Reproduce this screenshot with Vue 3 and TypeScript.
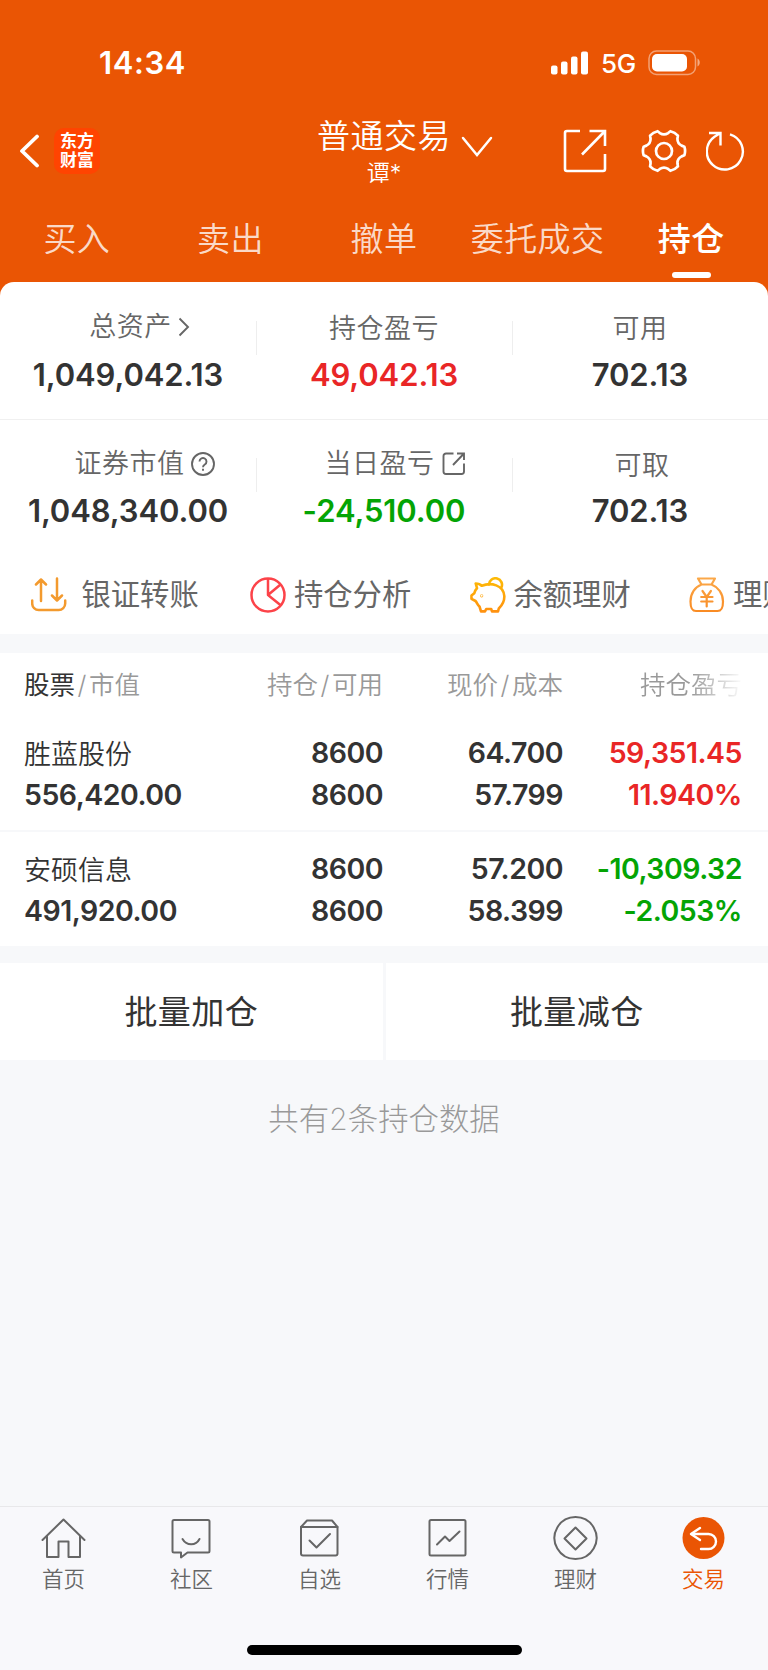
<script setup lang="ts">
interface Metric {
  label: string
  value: string
  tone?: 'up' | 'down'
  icon?: 'chevron' | 'help' | 'share'
  nudge?: boolean
}

interface Holding {
  name: string
  marketValue: string
  shares: string
  available: string
  price: string
  cost: string
  profit: string
  ratio: string
  tone: 'up' | 'down'
}

interface NavItem {
  label: string
  paths: string[]
  active?: boolean
}

const tabs: string[] = ['买入', '卖出', '撤单', '委托成交', '持仓']
const activeTab = '持仓'

const metricRows: Metric[][] = [
  [
    { label: '总资产', value: '1,049,042.13', icon: 'chevron' },
    { label: '持仓盈亏', value: '49,042.13', tone: 'up' },
    { label: '可用', value: '702.13' },
  ],
  [
    { label: '证券市值', value: '1,048,340.00', icon: 'help' },
    { label: '当日盈亏', value: '-24,510.00', tone: 'down', icon: 'share' },
    { label: '可取', value: '702.13', nudge: true },
  ],
]

const holdings: Holding[] = [
  {
    name: '胜蓝股份', marketValue: '556,420.00', shares: '8600', available: '8600',
    price: '64.700', cost: '57.799', profit: '59,351.45', ratio: '11.940%', tone: 'up',
  },
  {
    name: '安硕信息', marketValue: '491,920.00', shares: '8600', available: '8600',
    price: '57.200', cost: '58.399', profit: '-10,309.32', ratio: '-2.053%', tone: 'down',
  },
]

const navItems: NavItem[] = [
  { label: '首页', paths: ['M1.5 22.5 22.5 2l21 20.500', 'M6 19v20.500h11.500V24h10v15.500H39V19'] },
  { label: '社区', paths: ['M5 2.500h34a1.500 1.500 0 0 1 1.500 1.500v29.500a1.500 1.500 0 0 1-1.500 1.500H18.500L12 40v-5H5a1.500 1.500 0 0 1-1.500-1.500V4A1.500 1.500 0 0 1 5 2.500z', 'M13.500 21.500c4 7 13.500 7 17 0'] },
  { label: '自选', paths: ['M4 9.500 10 3h25l5.500 6.500V36a2 2 0 0 1-2 2H6a2 2 0 0 1-2-2z', 'M4 9.500h36.500', 'M12.500 23l7 7L33 16.500'] },
  { label: '行情', paths: ['M6 2.500h33a1.500 1.500 0 0 1 1.500 1.500v32.500a1.500 1.500 0 0 1-1.500 1.500H6a1.500 1.500 0 0 1-1.500-1.500V4A1.500 1.500 0 0 1 6 2.500z', 'M12 27l8-8 4.500 4.500L34.500 14'] },
  { label: '理财', paths: ['M22.500 -.500a21 21 0 1 0 .01 0z', 'M22.500 10 33.500 21l-11 11-11-11z'] },
  { label: '交易', paths: ['M19 10.500l-9 6 9 6', 'M11 16.500h16.500a7.200 7.200 0 0 1 0 15H20'], active: true },
]

/** Outline of a six-toothed cog centred on the origin. */
function cogPath(): string {
  const at = (deg: number, r: number): string => {
    const a = (deg * Math.PI) / 180
    return `${(Math.cos(a) * r).toFixed(2)} ${(Math.sin(a) * r).toFixed(2)}`
  }
  let d = `M${at(-12, 20.8)}`
  for (let k = 0; k < 6; k++) {
    const a = k * 60
    d += `Q${at(a, 21.8)} ${at(a + 12, 20.8)}L${at(a + 17, 18.4)}Q${at(a + 30, 15.2)} ${at(a + 43, 18.4)}L${at(a + 48, 20.8)}`
  }
  return d + 'z'
}
const cog = cogPath()
</script>

<template>
  <div class="screen">
    <header class="top">
      <div class="status">
        <span class="clock">14:34</span>
        <div class="signals">
          <svg class="bars" width="38" height="24" viewBox="0 0 38 24" fill="#fff">
            <rect x="0" y="14.500" width="6.500" height="9" rx="2" />
            <rect x="10" y="10.500" width="6.500" height="13" rx="2" />
            <rect x="20" y="5.500" width="6.500" height="18" rx="2" />
            <rect x="30" y=".5" width="7" height="23" rx="2" />
          </svg>
          <span class="network">5G</span>
          <svg class="battery" width="53" height="26" viewBox="0 0 53 26">
            <rect x="1" y="1" width="46.500" height="23.500" rx="7.500" fill="none" stroke="#fff" stroke-opacity=".45" stroke-width="1.500" />
            <rect x="4" y="4" width="35" height="17.500" rx="5" fill="#fff" />
            <path d="M49.500 8.500c3 1.500 3 6.500 0 8z" fill="#fff" fill-opacity=".5" />
          </svg>
        </div>
      </div>

      <div class="titlebar">
        <div class="side left">
          <svg width="22" height="34" viewBox="0 0 22 34" fill="none" stroke="#fff" stroke-width="3.800" stroke-linecap="round" stroke-linejoin="round">
            <path d="M18 2.500 3 17l15 14.500" />
          </svg>
          <div class="logo"><span>东方</span><span>财富</span></div>
        </div>
        <div class="account">
          <div class="account-name">普通交易</div>
          <div class="account-user">谭*</div>
        </div>
        <svg class="caret" width="32" height="22" viewBox="0 0 32 22" fill="none" stroke="#fff" stroke-width="2.500" stroke-linecap="round">
          <path d="M2 2 16 19 30 2" />
        </svg>
        <div class="side right">
          <svg class="open" width="44" height="44" viewBox="0 0 44 44" fill="none" stroke="#fff" stroke-width="2.600">
            <path d="M17 2H4a2 2 0 0 0-2 2v36a2 2 0 0 0 2 2h36a2 2 0 0 0 2-2V25M26.500 2H42v15M42 2 19 25.500" />
          </svg>
          <svg class="gear" width="46" height="46" viewBox="-23 -23 46 46" fill="none" stroke="#fff" stroke-width="2.700" stroke-linejoin="round">
            <path :d="cog" />
            <circle r="8" />
          </svg>
          <svg class="reload" width="40" height="42" viewBox="0 0 40 42" fill="none" stroke="#fff" stroke-width="2.400">
            <path d="M24 4.300a18 18 0 1 1-15.500 2.500L14 3.200M3 3h11.500v12.500" />
          </svg>
        </div>
      </div>

      <nav class="tabs">
        <div v-for="tab in tabs" :key="tab" class="tab" :class="{ active: tab === activeTab }">{{ tab }}</div>
      </nav>
    </header>

    <section class="summary">
      <div v-for="(row, i) in metricRows" :key="i" class="metrics" :class="{ second: i === 1 }">
        <div v-for="m in row" :key="m.label" class="metric">
          <div class="label" :class="[m.icon ? 'with-' + m.icon : '', { nudge: m.nudge }]">
            <span>{{ m.label }}</span>
            <svg v-if="m.icon === 'chevron'" width="12" height="20" viewBox="0 0 12 20">
              <path d="M1.500 1.500 10 10l-8.500 8.500" />
            </svg>
            <svg v-else-if="m.icon === 'help'" width="24" height="24" viewBox="0 0 24 24">
              <circle cx="12" cy="12" r="11" />
              <path d="M8.500 9.500a3.500 3.500 0 1 1 5.300 3c-1.300.8-1.800 1.300-1.800 2.700M12 16.800v2" />
            </svg>
            <svg v-else-if="m.icon === 'share'" width="24" height="24" viewBox="0 0 24 24">
              <path d="M11.500 1.500H4A2.500 2.500 0 0 0 1.500 4v15.500A2.500 2.500 0 0 0 4 22h15.500a2.500 2.500 0 0 0 2.500-2.500v-8M15 1.500h7V8M22 1.500 11 13" />
            </svg>
          </div>
          <div class="value" :class="m.tone">{{ m.value }}</div>
        </div>
      </div>

      <div class="shortcuts">
        <div class="shortcut transfer">
          <svg width="36" height="36" viewBox="0 0 36 36" fill="none" stroke="#f39a2e" stroke-width="2.500" stroke-linecap="round" stroke-linejoin="round">
            <path d="M1.200 23.500v3a6.500 6.500 0 0 0 6.500 6.500h20a6.500 6.500 0 0 0 6.500-6.500v-3M10 24V2.500M5 7.500l5-5 5 5M26 1.500V23M21 18.500l5 5 5-5" />
          </svg>
          <span>银证转账</span>
        </div>
        <div class="shortcut">
          <svg width="36" height="36" viewBox="0 0 36 36" fill="none" stroke="#fc4349" stroke-width="2.500" stroke-linejoin="round">
            <circle cx="18" cy="18" r="16.500" />
            <path d="M18 1.500V18L30.500 7.500M18 18l13 10.500" />
          </svg>
          <span>持仓分析</span>
        </div>
        <div class="shortcut">
          <svg width="36" height="36" viewBox="0 0 36 36" fill="none" stroke="url(#pig)" stroke-width="2.600" stroke-linejoin="round" stroke-linecap="round">
            <defs>
              <linearGradient id="pig" gradientUnits="userSpaceOnUse" x1="0" y1="0" x2="0" y2="36">
                <stop offset="0" stop-color="#fdbb05" /><stop offset="1" stop-color="#ff9010" />
              </linearGradient>
            </defs>
            <path d="M5.700 6.500c2.500 0 4.500.5 6 2.300C21 5 33.500 8 34.300 19c.3 5.500-2.300 9.500-5.500 12.500L28 34.400h-6l-.8-2.400h-5l-1.200 2.400h-4L9.500 29.500C7.500 28 7 25.500 5.500 24L1.500 21.800V18.500L4.300 16.300c.5-2 1.200-3.700 2.700-5.100z" />
            <path d="M19 7.500a6.500 6.500 0 1 1 12.300 3.200" />
            <circle cx="11.700" cy="18.800" r=".3" />
          </svg>
          <span>余额理财</span>
        </div>
        <div class="shortcut">
          <svg width="36" height="36" viewBox="0 0 36 36" fill="none" stroke="url(#bag)" stroke-width="2.200" stroke-linejoin="round" stroke-linecap="round">
            <defs>
              <linearGradient id="bag" gradientUnits="userSpaceOnUse" x1="0" y1="0" x2="0" y2="36">
                <stop offset="0" stop-color="#fba94a" /><stop offset="1" stop-color="#f98a22" />
              </linearGradient>
            </defs>
            <path d="M9 1.500h17l-3.500 6h-10zM12.500 7.500C6 10 1.500 16.500 1.500 24.500c0 7 1.500 9.500 5.500 9.500h21.500c4 0 5.500-2.500 5.500-9.500 0-8-5-14.500-11.500-17" />
            <path d="M13.500 14l4.200 6 4.200-6M17.700 20v9.500M12.200 20h11.300M12.200 24.500h11.300" />
          </svg>
          <span>理财</span>
        </div>
      </div>
    </section>

    <section class="holdings">
      <div class="grid head">
        <div><b>股票</b><i>/</i>市值</div>
        <div>持仓<i>/</i>可用</div>
        <div>现价<i>/</i>成本</div>
        <div class="faded">持仓盈亏</div>
      </div>
      <div v-for="h in holdings" :key="h.name" class="grid row">
        <div><p class="name">{{ h.name }}</p><p>{{ h.marketValue }}</p></div>
        <div><p>{{ h.shares }}</p><p>{{ h.available }}</p></div>
        <div><p>{{ h.price }}</p><p>{{ h.cost }}</p></div>
        <div :class="h.tone"><p>{{ h.profit }}</p><p>{{ h.ratio }}</p></div>
      </div>
    </section>

    <div class="actions">
      <div class="action">批量加仓</div>
      <div class="action">批量减仓</div>
    </div>

    <p class="count">共有2条持仓数据</p>

    <footer class="bottom">
      <div class="nav">
        <div v-for="item in navItems" :key="item.label" class="nav-item" :class="{ active: item.active }">
          <svg width="45" height="44" viewBox="0 -1.500 45 44">
            <circle v-if="item.active" class="disc" cx="22.500" cy="20.500" r="21" />
            <path v-for="p in item.paths" :key="p" :d="p" />
          </svg>
          <span>{{ item.label }}</span>
        </div>
      </div>
      <div class="home-indicator"></div>
    </footer>
  </div>
</template>

<style>
body {
  margin: 0;
  background: #f7f8fa;
}
</style>

<style scoped>
.screen {
  display: flex;
  flex-direction: column;
  width: 768px;
  height: 1670px;
  overflow: hidden;
  background: #f7f8fa;
  color: #333;
  font-family: Inter, "Noto Sans CJK SC", sans-serif;
}
p { margin: 0; }
svg { display: block; flex: none; }

.top {
  height: 296px;
  margin-bottom: -14px;
  background: #ea5504;
  color: #fff;
}
.status {
  display: flex;
  justify-content: space-between;
  align-items: center;
  height: 39px;
  padding: 43px 67px 0 99px;
}
.clock {
  font-size: 31px;
  font-weight: 600;
  letter-spacing: 0.6px;
}
.signals { display: flex; align-items: center; }
.network {
  margin: 1px 12px 0 12px;
  font-size: 26px;
  font-weight: 500;
  letter-spacing: -0.3px;
}

.titlebar {
  display: grid;
  grid-template-columns: 300px 168px 32px 1fr;
  align-items: start;
  height: 124px;
}
.side { display: flex; align-items: center; }
.left { padding: 46px 0 0 19px; gap: 13px; }
.logo {
  display: flex;
  flex-direction: column;
  justify-content: center;
  align-items: center;
  width: 46px;
  height: 46px;
  border-radius: 10px;
  background: #ff4401;
  font-size: 17px;
  font-weight: 700;
  line-height: 19.500px;
}
.account { text-align: center; }
.account-name {
  margin-top: 32px;
  font-size: 33px;
  font-weight: 350;
  line-height: 44px;
  letter-spacing: 0.5px;
}
.account-user {
  margin-top: 3px;
  font-size: 23px;
  font-weight: 350;
  line-height: 24px;
}
.caret { margin: 54px 0 0 -7px; }
.right { padding-top: 46px; }
.open { margin-left: 63px; }
.gear { margin-left: 34px; }
.reload { margin-left: 19px; }

.tabs {
  display: grid;
  grid-template-columns: repeat(5, 1fr);
  padding-top: 14px;
}
.tab {
  display: flex;
  flex-direction: column;
  align-items: center;
  color: rgba(255, 255, 255, 0.8);
  font-size: 33px;
  font-weight: 350;
  line-height: 38px;
  letter-spacing: 0.4px;
}
.tab.active { color: #fff; font-weight: 500; }
.tab.active::after {
  content: "";
  width: 39px;
  height: 6px;
  margin-top: 14px;
  border-radius: 3px;
  background: #fff;
}

.summary {
  height: 352px;
  border-radius: 14px 14px 0 0;
  background: #fff;
  overflow: hidden;
}
.metrics {
  display: grid;
  grid-template-columns: repeat(3, 1fr);
  height: 108px;
  padding-top: 29px;
  border-bottom: 1px solid #f0f0f0;
}
.metrics.second { padding-top: 28px; border-bottom: 0; }
.metric { position: relative; }
.metric + .metric::before {
  content: "";
  position: absolute;
  left: 0;
  top: 10px;
  width: 1px;
  height: 34px;
  background: #eee;
}
.label {
  display: flex;
  justify-content: center;
  align-items: center;
  height: 36px;
  color: #666;
  font-size: 27px;
  font-weight: 350;
  line-height: 36px;
  letter-spacing: 0.5px;
}
.label svg { fill: none; stroke: #666; stroke-width: 1.900; }
.with-chevron, .with-help, .with-share { transform: translateY(-2px); }
.with-chevron svg { margin: 0 -23px 0 6px; }
.with-help svg { margin: 0 -33px 0 6px; }
.with-share svg { margin: 0 -22px 0 7px; }
.nudge { padding-left: 4px; }
.value {
  margin-top: 10px;
  font-size: 31px;
  font-weight: 600;
  letter-spacing: -0.1px;
  line-height: 36px;
  text-align: center;
}
.second .value { margin-top: 9px; }
.up { color: #e92626; }
.down { color: #04a404; }

.shortcuts {
  display: flex;
  height: 78px;
  padding-left: 30.500px;
}
.shortcut {
  display: flex;
  flex: none;
  align-items: center;
  gap: 8px;
  width: 219.500px;
  color: #666;
  font-size: 29.300px;
  line-height: 36px;
  white-space: nowrap;
}
.transfer { gap: 15px; }

.holdings {
  height: 293px;
  margin-top: 19px;
  background: #fff;
}
.grid {
  display: grid;
  grid-template-columns: 179px 180px 180px 179px;
  padding: 0 26px 0 24px;
}
.grid > div + div { text-align: right; }
.head {
  height: 63px;
  color: #999;
  font-size: 25.500px;
  font-weight: 350;
  line-height: 64px;
}
.head b { color: #333; font-weight: 400; }
.head i { margin: 0 2.500px; font-style: normal; }
.head .faded {
  background: linear-gradient(90deg, #999 0 128px, rgba(153, 153, 153, 0.05) 178px);
  background-clip: text;
  color: transparent;
}
.row {
  height: 98px;
  padding-top: 16px;
  border-bottom: 2px solid #f7f8fa;
  font-size: 28.500px;
  font-weight: 600;
  line-height: 42px;
  letter-spacing: -0.5px;
}
.row:last-child { border-bottom: 0; }
.row .name {
  padding-top: 3px;
  font-size: 27px;
  font-weight: 350;
  line-height: 39px;
  letter-spacing: 0;
}

.actions {
  display: grid;
  grid-template-columns: 1fr 1fr;
  gap: 3px;
  margin-top: 17px;
}
.action {
  height: 97px;
  background: #fff;
  font-size: 33px;
  line-height: 99px;
  letter-spacing: 0.4px;
  text-align: center;
}
.count {
  margin-top: 39.500px;
  color: #999;
  font-size: 30.400px;
  font-weight: 200;
  line-height: 38px;
  text-align: center;
}

.bottom {
  height: 163px;
  margin-top: auto;
  border-top: 1.500px solid #e8e8ea;
  background: #f8f8fb;
}
.nav {
  display: grid;
  grid-template-columns: repeat(6, 128px);
  margin-left: -0.500px;
}
.nav-item {
  display: flex;
  flex-direction: column;
  align-items: center;
  padding-top: 9px;
  color: #666;
  font-size: 21.500px;
  font-weight: 350;
  line-height: 28px;
}
.nav-item span { margin-top: 5px; }
.nav-item svg {
  fill: none;
  stroke: #666;
  stroke-width: 2;
  stroke-linecap: round;
  stroke-linejoin: round;
}
.nav-item.active { color: #ea5504; }
.nav-item.active svg { stroke: #fff; stroke-width: 2.400; }
.nav-item svg .disc { fill: #ea5504; stroke: none; }
.home-indicator {
  width: 275px;
  height: 10px;
  margin: 52px auto 0;
  border-radius: 5px;
  background: #000;
}
</style>
